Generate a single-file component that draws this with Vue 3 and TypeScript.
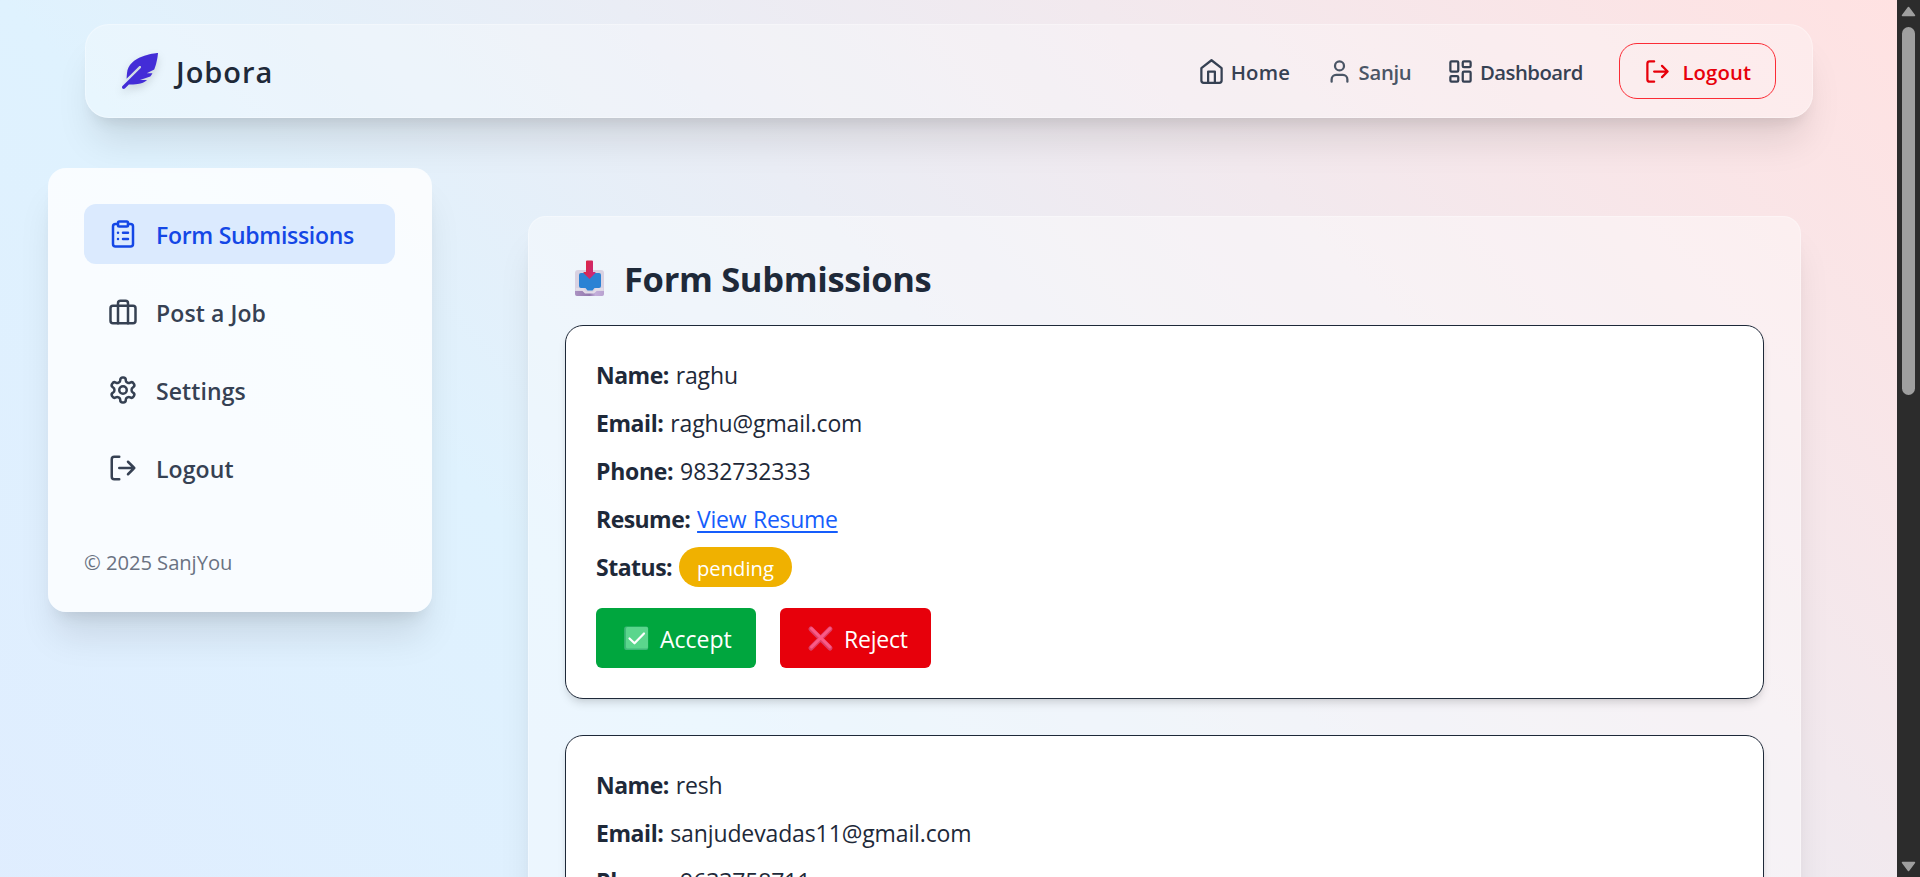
<script setup lang="ts">
interface MenuItem {
  label: string
  icon: 'clipboard' | 'briefcase' | 'settings' | 'logout'
  key: string
  active?: boolean
}

interface Submission {
  name: string
  email: string
  phone: string
  status: string
}

const menu: MenuItem[] = [
  { label: 'Form Submissions', icon: 'clipboard', key: 'forms', active: true },
  { label: 'Post a Job', icon: 'briefcase', key: 'post' },
  { label: 'Settings', icon: 'settings', key: 'settings' },
  { label: 'Logout', icon: 'logout', key: 'signout' },
]

const submissions: Submission[] = [
  { name: 'raghu', email: 'raghu@gmail.com', phone: '9832732333', status: 'pending' },
  { name: 'resh', email: 'sanjudevadas11@gmail.com', phone: '9633758711', status: 'pending' },
]
</script>

<template>
  <div class="viewport">
    <div class="page">
      <header class="navbar">
        <div class="brand">
          <svg class="feather" viewBox="0 0 512 512" fill="currentColor">
            <path d="M512 0C460.22 3.56 96.44 38.2 71.01 287.61c-3.09 26.66-4.84 53.44-5.99 80.24l178.87-178.69c6.25-6.25 16.4-6.25 22.65 0s6.25 16.38 0 22.63L7.04 471.03c-9.38 9.37-9.38 24.57 0 33.94 9.38 9.37 24.59 9.37 33.98 0l57.13-57.07c42.09-.14 84.15-2.53 125.96-7.36 53.48-5.44 97.02-26.47 132.58-56.54H255.74l146.79-48.88c11.25-14.89 21.37-30.71 30.45-47.12h-81.14l106.54-53.21C500.29 132.86 510.19 26.26 512 0z" />
          </svg>
          <span class="brand-name">Jobora</span>
        </div>
        <nav class="links">
          <a class="link home">
            <svg class="icon" viewBox="0 0 24 24">
              <path d="m3 9 9-7 9 7v11a2 2 0 0 1-2 2H5a2 2 0 0 1-2-2z" />
              <path d="M9 22V12h6v10" />
            </svg>
            <span>Home</span>
          </a>
          <a class="link user">
            <svg class="icon" viewBox="0 0 24 24">
              <path d="M19 21v-2a4 4 0 0 0-4-4H9a4 4 0 0 0-4 4v2" />
              <circle cx="12" cy="7" r="4" />
            </svg>
            <span>Sanju</span>
          </a>
          <a class="link dashboard">
            <svg class="icon" viewBox="0 0 24 24">
              <rect width="7" height="9" x="3" y="3" rx="1" />
              <rect width="7" height="5" x="14" y="3" rx="1" />
              <rect width="7" height="9" x="14" y="12" rx="1" />
              <rect width="7" height="5" x="3" y="16" rx="1" />
            </svg>
            <span>Dashboard</span>
          </a>
          <button class="logout" type="button">
            <svg class="icon" viewBox="0 0 24 24">
              <path d="M9 21H5a2 2 0 0 1-2-2V5a2 2 0 0 1 2-2h4" />
              <path d="m16 17 5-5-5-5M21 12H9" />
            </svg>
            <span>Logout</span>
          </button>
        </nav>
      </header>

      <div class="body">
        <aside class="sidebar">
          <a v-for="item in menu" :key="item.key" class="item" :class="[item.key, { active: item.active }]">
            <svg class="icon" viewBox="0 0 24 24">
              <template v-if="item.icon === 'clipboard'">
                <rect width="8" height="4" x="8" y="2" rx="1" />
                <path d="M16 4h2a2 2 0 0 1 2 2v14a2 2 0 0 1-2 2H6a2 2 0 0 1-2-2V6a2 2 0 0 1 2-2h2" />
                <path d="M12 11h4M12 16h4M8 11h.01M8 16h.01" />
              </template>
              <template v-else-if="item.icon === 'briefcase'">
                <rect width="20" height="14" x="2" y="7" rx="2" />
                <path d="M16 21V5a2 2 0 0 0-2-2h-4a2 2 0 0 0-2 2v16" />
              </template>
              <template v-else-if="item.icon === 'settings'">
                <path d="M12.22 2h-.44a2 2 0 0 0-2 2v.18a2 2 0 0 1-1 1.73l-.43.25a2 2 0 0 1-2 0l-.15-.08a2 2 0 0 0-2.73.73l-.22.38a2 2 0 0 0 .73 2.73l.15.1a2 2 0 0 1 1 1.72v.51a2 2 0 0 1-1 1.74l-.15.09a2 2 0 0 0-.73 2.73l.22.38a2 2 0 0 0 2.73.73l.15-.08a2 2 0 0 1 2 0l.43.25a2 2 0 0 1 1 1.73V20a2 2 0 0 0 2 2h.44a2 2 0 0 0 2-2v-.18a2 2 0 0 1 1-1.73l.43-.25a2 2 0 0 1 2 0l.15.08a2 2 0 0 0 2.73-.73l.22-.39a2 2 0 0 0-.73-2.73l-.15-.08a2 2 0 0 1-1-1.74v-.5a2 2 0 0 1 1-1.74l.15-.09a2 2 0 0 0 .73-2.73l-.22-.38a2 2 0 0 0-2.73-.73l-.15.08a2 2 0 0 1-2 0l-.43-.25a2 2 0 0 1-1-1.73V4a2 2 0 0 0-2-2z" />
                <circle cx="12" cy="12" r="3" />
              </template>
              <template v-else>
                <path d="M9 21H5a2 2 0 0 1-2-2V5a2 2 0 0 1 2-2h4" />
                <path d="m16 17 5-5-5-5M21 12H9" />
              </template>
            </svg>
            <span>{{ item.label }}</span>
          </a>
          <p class="copyright">© 2025 SanjYou</p>
        </aside>

        <main class="panel">
          <h1 class="title">
            <svg class="inbox" viewBox="0 0 49 48">
              <defs>
                <linearGradient id="arrow" x1="0" x2="1" y1="0" y2="0.4">
                  <stop offset="0" stop-color="#e32636" />
                  <stop offset="1" stop-color="#c92a7c" />
                </linearGradient>
                <linearGradient id="tray" x1="0" x2="1" y1="0" y2="0">
                  <stop offset="0" stop-color="#ab92c2" />
                  <stop offset="0.5" stop-color="#9278ad" />
                  <stop offset="0.7" stop-color="#c3aeda" />
                  <stop offset="1" stop-color="#b9a2d0" />
                </linearGradient>
              </defs>
              <rect x="10" y="17" width="29" height="26" rx="3" fill="#d9d2e2" />
              <path d="M10 38h8l4 2h5l4-2h8v3a2 2 0 0 1-2 2H12a2 2 0 0 1-2-2z" fill="url(#tray)" />
              <path d="M11 35h7l3 4h7l3-4h7v2.500h-6l-3 3h-9l-3-3h-6z" fill="#e2dce8" />
              <path d="M16 20h18a2 2 0 0 1 2 2v11a2 2 0 0 1-2 2h-4.500l-2 2.500h-5l-2-2.500H16a2 2 0 0 1-2-2V22a2 2 0 0 1 2-2z" fill="#2b82d4" />
              <path d="M22 7.500h5a1 1 0 0 1 1 1V19h2.200q.8.500 0 1.200L24.500 26l-5.700-5.800q-.8-.7 0-1.200H21V8.500a1 1 0 0 1 1-1z" fill="url(#arrow)" />
            </svg>
            <span>Form Submissions</span>
          </h1>

          <div class="cards">
            <article v-for="s in submissions" :key="s.email" class="card">
              <p class="row"><strong class="l-name">Name:</strong> {{ s.name }}</p>
              <p class="row"><strong class="l-email">Email:</strong> {{ s.email }}</p>
              <p class="row"><strong class="l-phone">Phone:</strong> {{ s.phone }}</p>
              <p class="row"><strong class="l-resume">Resume:</strong> <a class="resume">View Resume</a></p>
              <p class="row"><strong class="l-status">Status:</strong> <span class="badge">{{ s.status }}</span></p>
              <div class="actions">
                <button class="btn accept" type="button">
                  <svg class="emoji" viewBox="0 0 33 30">
                    <rect x="4.200" y="3.500" width="24" height="23.500" rx="2" fill="#3fb878" />
                    <rect x="6" y="4" width="22" height="21.500" rx="1.500" fill="#5bd68d" />
                    <path d="m9.500 15.500 5 4.800 9.500-9.800" fill="none" stroke="#fff" stroke-width="2.200" stroke-linecap="round" stroke-linejoin="round" />
                  </svg>
                  <span>Accept</span>
                </button>
                <button class="btn reject" type="button">
                  <svg class="emoji" viewBox="0 0 33 30">
                    <path d="m7 6 19 19M26 6 7 25" fill="none" stroke="#dc3f68" stroke-width="5" stroke-linecap="round" />
                    <path d="m7.500 5.500 18.500 18.500M26 5.500 7.500 24" fill="none" stroke="#fb5a86" stroke-width="3" stroke-linecap="round" />
                  </svg>
                  <span>Reject</span>
                </button>
              </div>
            </article>
          </div>
        </main>
      </div>
    </div>

    <div class="scrollbar">
      <svg class="caret" viewBox="0 0 15 11"><path d="M7.500 1.500 13.500 9.500H1.500z" /></svg>
      <div class="track"><div class="thumb"></div></div>
      <svg class="caret down" viewBox="0 0 15 11"><path d="M7.500 9.500 13.500 1.500H1.500z" /></svg>
    </div>
  </div>
</template>

<style>
html,
body {
  margin: 0;
  overflow: hidden;
}
</style>

<style scoped>
* {
  box-sizing: border-box;
}

.viewport {
  display: flex;
  width: 1920px;
  height: 877px;
  overflow: hidden;
  font-family: 'Open Sans', 'Noto Sans', sans-serif;
  color: #1e2939;
}

.page {
  width: 1897px;
  height: 1975px;
  flex: none;
  padding-top: 24px;
  background: linear-gradient(to top right in oklab, #e0e7ff, #dff2fe, #ffe2e2);
}

.icon {
  width: 27px;
  height: 27px;
  flex: none;
  fill: none;
  stroke: currentColor;
  stroke-width: 2;
  stroke-linecap: round;
  stroke-linejoin: round;
}

.navbar {
  display: flex;
  align-items: center;
  justify-content: space-between;
  width: 1728px;
  height: 94px;
  margin: 0 auto 0 85px;
  padding: 0 36px;
  border: 1px solid rgba(255, 255, 255, 0.3);
  border-radius: 24px;
  background: rgba(255, 255, 255, 0.3);
  box-shadow: 0 30px 37.5px -7.5px rgba(0, 0, 0, 0.1), 0 12px 15px -9px rgba(0, 0, 0, 0.1);
}

.brand {
  display: flex;
  align-items: center;
  gap: 18px;
}

.feather {
  width: 36px;
  height: 36px;
  color: #432dd7;
  filter: drop-shadow(0 4px 4px rgba(0, 0, 0, 0.14));
}

.brand-name {
  padding-top: 2px;
  font-size: 29px;
  font-weight: 570;
  line-height: 42px;
  letter-spacing: 0.95px;
}

.links {
  display: flex;
  align-items: center;
  gap: 36px;
}

.links span {
  padding-top: 2px;
}

.link {
  display: flex;
  align-items: center;
  gap: 5.5px;
  font-size: 20.3px;
  font-weight: 560;
  line-height: 30px;
  color: #364153;
}

.home {
  letter-spacing: 0.2px;
}

.user {
  letter-spacing: -0.3px;
  color: #4a5565;
}

.dashboard {
  letter-spacing: -0.5px;
}

.logout {
  display: flex;
  align-items: center;
  gap: 11.5px;
  width: 157px;
  height: 56px;
  padding: 0 24px;
  border: 1px solid #fb2c36;
  border-radius: 18px;
  background: none;
  font: 560 20.3px/30px 'Open Sans', sans-serif;
  letter-spacing: 0.1px;
  color: #e7000b;
}

.body {
  display: flex;
  align-items: flex-start;
  gap: 96px;
  padding: 50px 96px 0 48px;
}

.sidebar {
  width: 384px;
  height: 444px;
  flex: none;
  padding: 36px;
  border-radius: 18px;
  background: rgba(255, 255, 255, 0.8);
  box-shadow: 0 30px 37.5px -7.5px rgba(0, 0, 0, 0.1), 0 12px 15px -9px rgba(0, 0, 0, 0.1);
}

.item {
  display: flex;
  align-items: center;
  gap: 18px;
  width: 311px;
  height: 60px;
  margin-bottom: 18px;
  padding: 0 24px;
  border-radius: 12px;
  font: 560 23px/36px 'Open Sans', sans-serif;
  letter-spacing: 0.1px;
  color: #364153;
}

.item span {
  padding-top: 2px;
}

.item .icon {
  width: 30px;
  height: 30px;
}

.item.forms {
  letter-spacing: -0.3px;
}

.item.active {
  background: #dbeafe;
  color: #1447e6;
}

.copyright {
  margin: 49px 0 0;
  font-size: 20.2px;
  line-height: 30px;
  letter-spacing: -0.05px;
  color: #6a7282;
}

.panel {
  width: 1273px;
  height: 1660px;
  margin-top: 48px;
  padding: 36px;
  border: 1px solid rgba(255, 255, 255, 0.3);
  border-radius: 18px;
  background: rgba(255, 255, 255, 0.4);
  box-shadow: 0 30px 37.5px -7.5px rgba(0, 0, 0, 0.1), 0 12px 15px -9px rgba(0, 0, 0, 0.1);
}

.title {
  display: flex;
  align-items: center;
  gap: 10px;
  height: 48px;
  margin: 0 0 24px;
  font-size: 34.5px;
  font-weight: 700;
  line-height: 48px;
  letter-spacing: -0.33px;
}

.title span {
  padding-top: 3px;
}

.inbox {
  width: 49px;
  height: 48px;
}

.cards {
  display: flex;
  flex-direction: column;
  gap: 36px;
}

.card {
  display: flex;
  flex-direction: column;
  gap: 12px;
  height: 374px;
  padding: 30px;
  border: 1px solid #1e2939;
  border-radius: 18px;
  background: #fff;
  box-shadow: 0 6px 9px -1.5px rgba(0, 0, 0, 0.1), 0 3px 6px -3px rgba(0, 0, 0, 0.1);
}

.row {
  height: 36px;
  margin: 0;
  font-size: 23px;
  line-height: 38px;
  letter-spacing: -0.12px;
  word-spacing: 1px;
  white-space: nowrap;
}

.row strong {
  font-weight: 700;
}

.l-name {
  letter-spacing: -0.5px;
}

.l-email {
  letter-spacing: -0.43px;
}

.l-phone {
  letter-spacing: -0.3px;
}

.l-resume {
  letter-spacing: -0.55px;
}

.l-status {
  letter-spacing: -0.5px;
}

.resume {
  letter-spacing: -0.27px;
  color: #155dfc;
  text-decoration: underline;
  text-decoration-thickness: 2px;
  text-underline-offset: 3px;
}

.badge {
  padding: 7px 18px 5px;
  border-radius: 20px;
  background: #f0b100;
  font-size: 20.2px;
  letter-spacing: 0;
  color: #fff;
}

.actions {
  display: flex;
  gap: 24px;
  margin-top: 12px;
}

.btn {
  display: flex;
  align-items: center;
  gap: 7px;
  height: 60px;
  padding: 0 24px;
  border: 0;
  border-radius: 6px;
  font: 450 23px/36px 'Open Sans', sans-serif;
  color: #fff;
}

.btn span {
  padding-top: 2px;
}

.emoji {
  width: 33px;
  height: 30px;
  flex: none;
}

.accept {
  width: 160px;
  background: #00a63e;
}

.reject {
  width: 151px;
  background: #e7000b;
  letter-spacing: -0.2px;
}

.scrollbar {
  display: flex;
  flex-direction: column;
  align-items: center;
  width: 23px;
  height: 877px;
  padding: 6px 0 5px;
  background: #2c2c2c;
}

.caret {
  width: 15px;
  height: 11px;
  flex: none;
  fill: #9f9f9f;
  stroke: #9f9f9f;
  stroke-width: 1.5;
  stroke-linejoin: round;
}

.track {
  flex: 1;
  padding-top: 10px;
}

.thumb {
  width: 13px;
  height: 368px;
  border-radius: 6.5px;
  background: #9f9f9f;
}
</style>
